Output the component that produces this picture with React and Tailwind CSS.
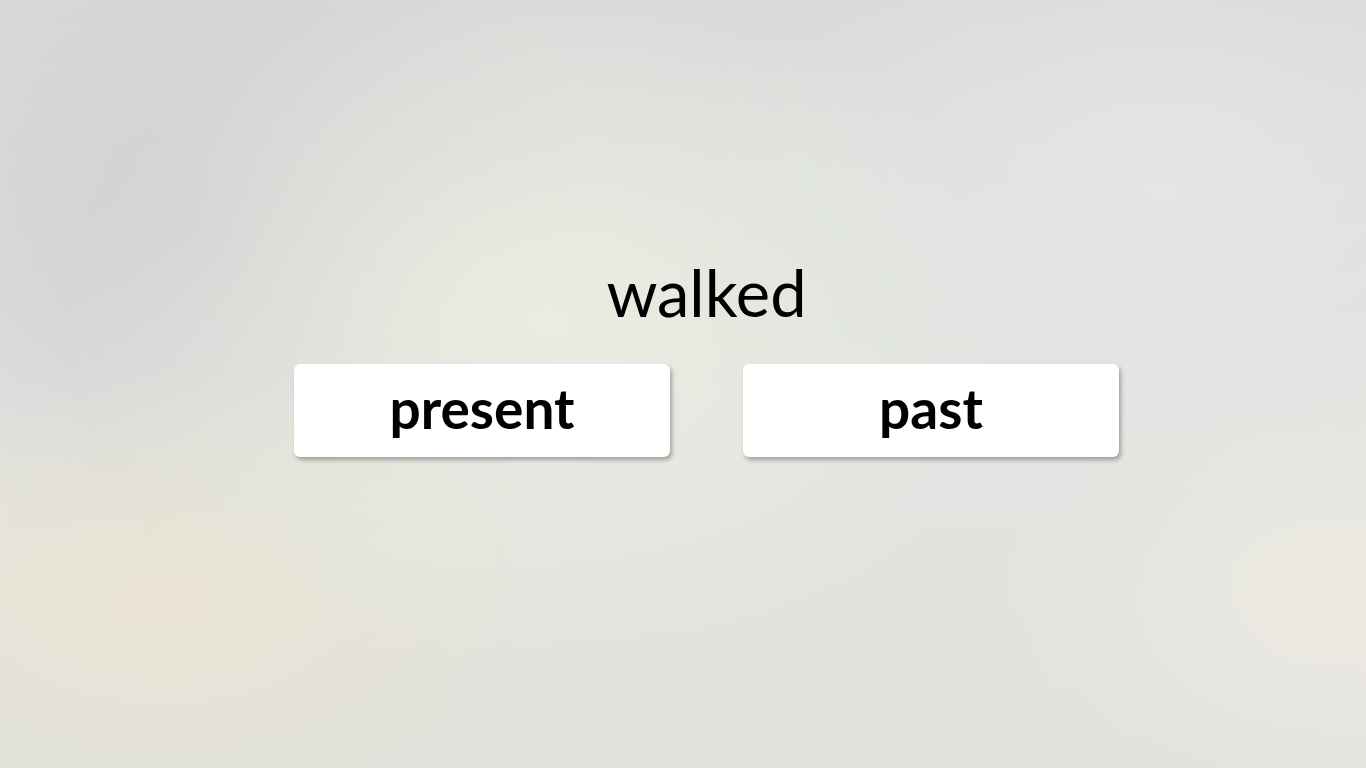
import React from "react";

const choices = ["present", "past"];

export default function App() {
  return (
    <div
      className="relative min-h-screen w-full overflow-hidden bg-[#dfe1df] font-['Lato','Open_Sans',sans-serif] text-black"
    >
      {/* soft blurred backdrop */}
      <div className="absolute inset-0 bg-[radial-gradient(ellipse_35%_45%_at_40%_42%,#e9ede0_0%,rgba(233,237,224,0)_100%),radial-gradient(ellipse_30%_30%_at_12%_78%,#e9e3d3_0%,rgba(233,227,211,0)_100%),radial-gradient(ellipse_25%_30%_at_98%_78%,#ece9e1_0%,rgba(236,233,225,0)_100%),radial-gradient(ellipse_30%_45%_at_15%_30%,#cfd1d2_0%,rgba(207,209,210,0)_100%),radial-gradient(ellipse_35%_40%_at_85%_25%,#e3e6e4_0%,rgba(227,230,228,0)_100%),linear-gradient(180deg,#d8dad9_0%,#e2e4e1_55%,#e1e2dd_100%)]"></div>

      <div className="relative flex min-h-screen flex-col items-center pl-[47px] pt-[252px]">
        <h1 className="text-[65px] font-normal leading-[80px]">walked</h1>

        <div className="mt-[32px] flex gap-[73px]">
          {choices.map((label) => (
            <button
              key={label}
              className="flex h-[93px] w-[376px] items-center justify-center rounded-[6px] bg-white pb-[4px] text-[55px] font-bold leading-none shadow-[2px_3px_4px_rgba(0,0,0,0.3)]"
            >
              {label}
            </button>
          ))}
        </div>
      </div>
    </div>
  );
}
